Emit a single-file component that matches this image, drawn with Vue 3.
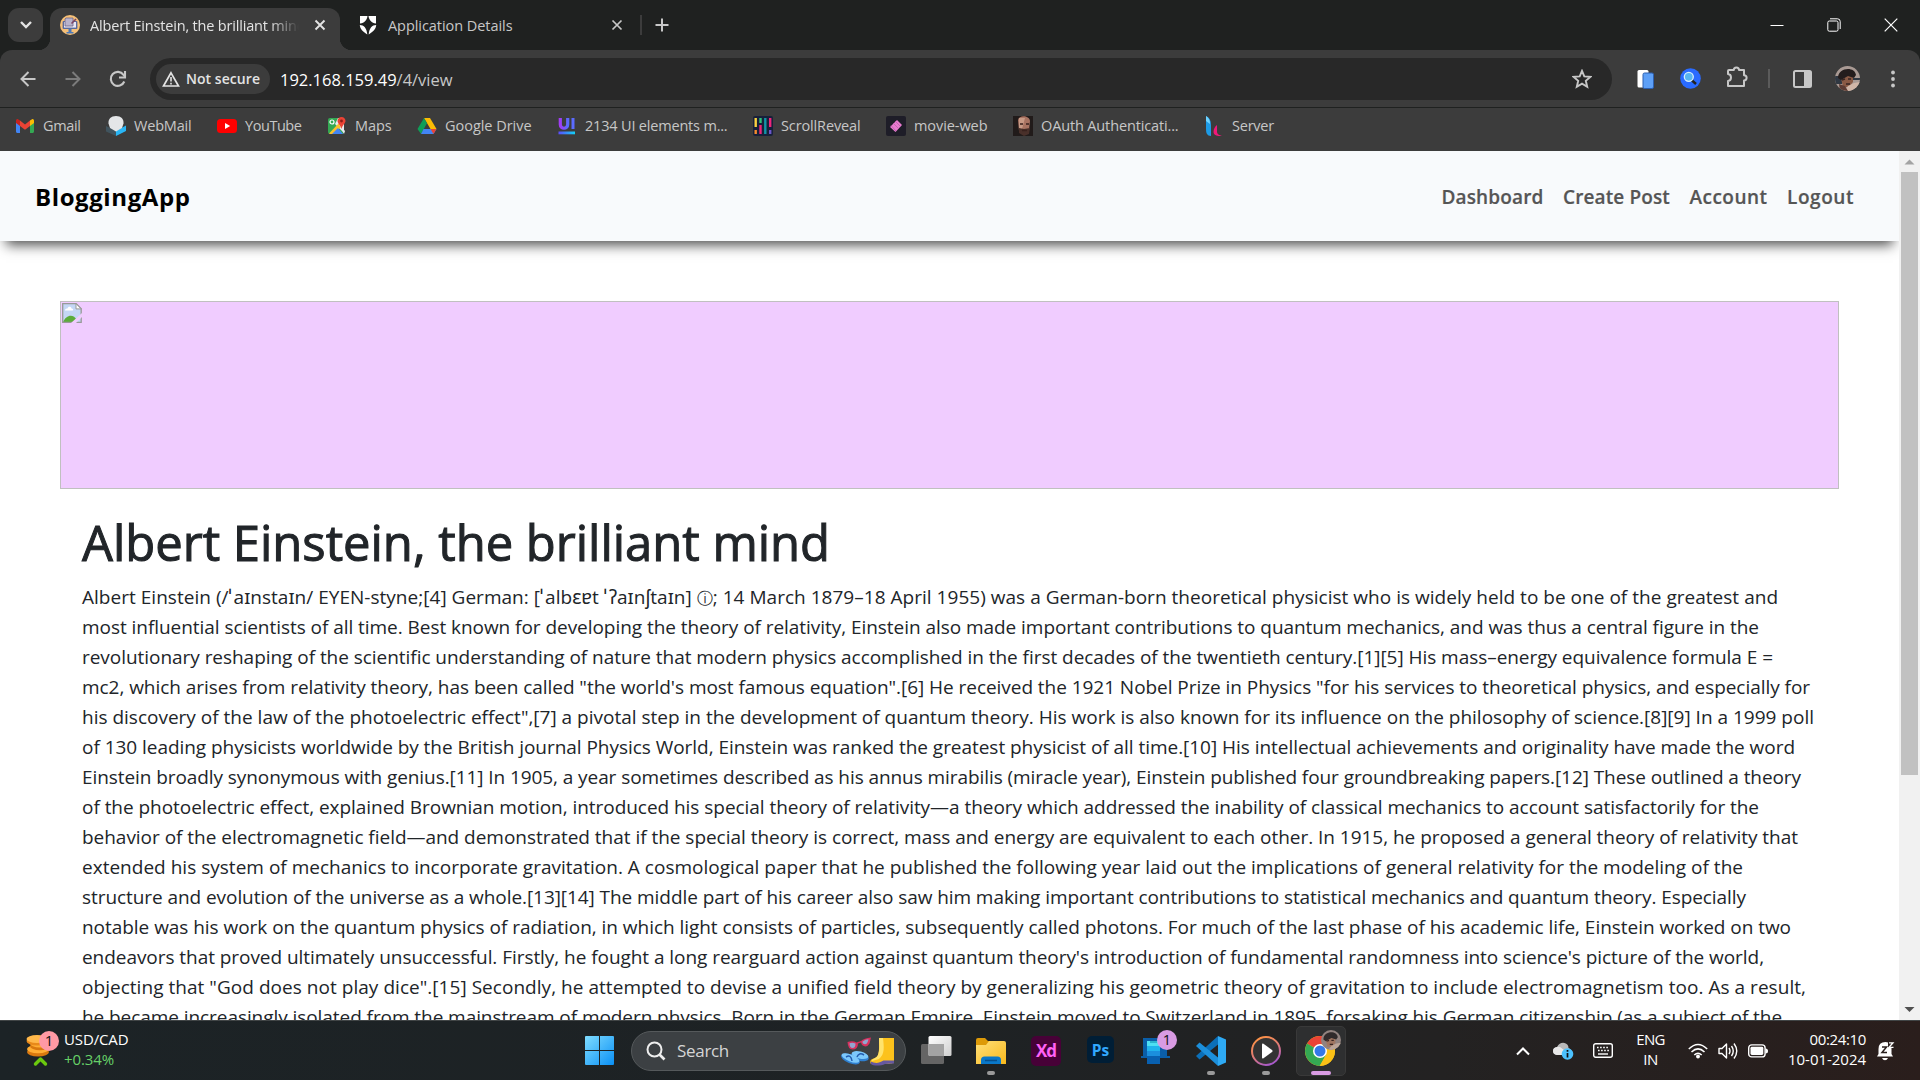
<script setup>
// Stretches a single line of text to a given width by adjusting its tracking.
const vFit = {
  mounted(el, { value }) {
    const n = el.textContent.length
    const w = el.getBoundingClientRect().width
    el.style.letterSpacing = (value - w) / n + 'px'
  },
}

const bookmarks = [
  { icon: 'gmail', text: 'Gmail', w: 37.5 },
  { icon: 'webmail', text: 'WebMail', w: 57.5 },
  { icon: 'youtube', text: 'YouTube', w: 56.5 },
  { icon: 'maps', text: 'Maps', w: 36.5 },
  { icon: 'drive', text: 'Google Drive', w: 86.5 },
  { icon: 'ui', text: '2134 UI elements m...', w: 142.5 },
  { icon: 'reveal', text: 'ScrollReveal', w: 79.5 },
  { icon: 'movie', text: 'movie-web', w: 73.5 },
  { icon: 'oauth', text: 'OAuth Authenticati...', w: 137.5 },
  { icon: 'server', text: 'Server', w: 42 },
]

const links = [
  { text: 'Dashboard', w: 102 },
  { text: 'Create Post', w: 107 },
  { text: 'Account', w: 78 },
  { text: 'Logout', w: 67 },
]

const lines = [
  ['Albert Einstein (/ˈaɪnstaɪn/ EYEN-styne;[4] German: [ˈalbɛɐt ˈʔaɪnʃtaɪn] ⓘ; 14 March 1879–18 April 1955) was a German-born theoretical physicist who is widely held to be one of the greatest and', 1696],
  ['most influential scientists of all time. Best known for developing the theory of relativity, Einstein also made important contributions to quantum mechanics, and was thus a central figure in the', 1677],
  ['revolutionary reshaping of the scientific understanding of nature that modern physics accomplished in the first decades of the twentieth century.[1][5] His mass–energy equivalence formula E =', 1691],
  ['mc2, which arises from relativity theory, has been called "the world\'s most famous equation".[6] He received the 1921 Nobel Prize in Physics "for his services to theoretical physics, and especially for', 1728],
  ['his discovery of the law of the photoelectric effect",[7] a pivotal step in the development of quantum theory. His work is also known for its influence on the philosophy of science.[8][9] In a 1999 poll', 1732],
  ['of 130 leading physicists worldwide by the British journal Physics World, Einstein was ranked the greatest physicist of all time.[10] His intellectual achievements and originality have made the word', 1713],
  ['Einstein broadly synonymous with genius.[11] In 1905, a year sometimes described as his annus mirabilis (miracle year), Einstein published four groundbreaking papers.[12] These outlined a theory', 1719],
  ['of the photoelectric effect, explained Brownian motion, introduced his special theory of relativity—a theory which addressed the inability of classical mechanics to account satisfactorily for the', 1677],
  ['behavior of the electromagnetic field—and demonstrated that if the special theory is correct, mass and energy are equivalent to each other. In 1915, he proposed a general theory of relativity that', 1716],
  ['extended his system of mechanics to incorporate gravitation. A cosmological paper that he published the following year laid out the implications of general relativity for the modeling of the', 1661],
  ['structure and evolution of the universe as a whole.[13][14] The middle part of his career also saw him making important contributions to statistical mechanics and quantum theory. Especially', 1664],
  ['notable was his work on the quantum physics of radiation, in which light consists of particles, subsequently called photons. For much of the last phase of his academic life, Einstein worked on two', 1709],
  ['endeavors that proved ultimately unsuccessful. Firstly, he fought a long rearguard action against quantum theory\'s introduction of fundamental randomness into science\'s picture of the world,', 1682],
  ['objecting that "God does not play dice".[15] Secondly, he attempted to devise a unified field theory by generalizing his geometric theory of gravitation to include electromagnetism too. As a result,', 1724],
  ['he became increasingly isolated from the mainstream of modern physics. Born in the German Empire, Einstein moved to Switzerland in 1895, forsaking his German citizenship (as a subject of the', 1700],
]

// Stress marks and the info sign need their own spacing.
const parts = (text) => text.split(/([ˈⓘ])/).filter(Boolean)
const kind = (p) => (p === 'ˈ' ? 'stress' : p === 'ⓘ' ? 'info' : '')
</script>

<template>
  <div class="screen">
    <header class="tabs">
      <div class="tab-search">
        <svg width="14" height="10" viewBox="0 0 14 10"><path d="M2 2l5 5 5-5" fill="none" stroke="#e3e3e3" stroke-width="2.4" /></svg>
      </div>
      <div class="tab active">
        <svg width="20" height="20" viewBox="0 0 20 20">
          <circle cx="10" cy="10" r="10" fill="#f6c078" />
          <rect x="2.6" y="6" width="14.8" height="8" rx="1" fill="#5a6a9c" />
          <rect x="4" y="7" width="12" height="5.6" fill="#e9e6f4" />
          <path d="M6 3h7v8H5V4z" fill="#b9b3cc" stroke="#6c6489" stroke-width=".8" />
          <path d="M16 4l-4.5 4.5" stroke="#7c4364" stroke-width="1.6" />
          <path d="M8.5 14h3v3h2v1.4h-7V17h2z" fill="#4b78b8" />
        </svg>
        <div class="tab-title fade"><span v-fit="215.5">Albert Einstein, the brilliant mind</span></div>
        <svg class="x" width="12" height="12" viewBox="0 0 12 12"><path d="M1.5 1.5l9 9M10.5 1.5l-9 9" stroke="#e3e3e3" stroke-width="1.9" /></svg>
      </div>
      <div class="tab second">
        <svg width="18" height="20" viewBox="0 0 18 20">
          <path d="M1 1h7.500C8 5 5.500 8 1 8.500zM17 1H9.500C10 5 12.500 8 17 8.500zM.8 10c4 0 7 3 7.500 9.500C4.500 17 1 14.500.8 10zM17.200 10c-4 0-7 3-7.500 9.500 3.800-2.500 7.300-5 7.500-9.500z" fill="#fff" />
        </svg>
        <div class="tab-title"><span v-fit="124.5">Application Details</span></div>
        <svg class="x" width="12" height="12" viewBox="0 0 12 12"><path d="M1.500 1.500l9 9M10.500 1.500l-9 9" stroke="#c7c7c7" stroke-width="1.700" /></svg>
      </div>
      <i class="tab-sep"></i>
      <svg class="plus" width="14" height="14" viewBox="0 0 14 14"><path d="M7 .5v13M.5 7h13" stroke="#c7c7c7" stroke-width="2" /></svg>
      <div class="win">
        <svg width="14" height="14" viewBox="0 0 14 14"><path d="M.5 7.500h13" stroke="#fff" /></svg>
        <svg width="14" height="14" viewBox="0 0 14 14" fill="none" stroke="#fff"><rect x=".8" y="3" width="10.200" height="10.200" rx="1.500" /><path d="M3 .8h7.500a2.700 2.700 0 0 1 2.700 2.700V11" /></svg>
        <svg width="14" height="14" viewBox="0 0 14 14"><path d="M.7.7l12.600 12.600M13.300.7L.7 13.300" stroke="#fff" stroke-width="1.200" /></svg>
      </div>
    </header>

    <div class="toolbar">
      <svg class="back" width="16" height="16" viewBox="0 0 16 16"><path d="M15.500 8H2M8.500 1L1.500 8l7 7" fill="none" stroke="#c7c7c7" stroke-width="2" /></svg>
      <svg class="fwd" width="16" height="16" viewBox="0 0 16 16"><path d="M.5 8H14M7.500 1l7 7-7 7" fill="none" stroke="#7b7b7b" stroke-width="2" /></svg>
      <svg class="reload" width="18" height="18" viewBox="0 0 18 18"><path d="M15.300 11.500A7 7 0 1 1 14.500 4.800L16 6.500" fill="none" stroke="#c7c7c7" stroke-width="2.100" /><path d="M16 1v6.500h-6" fill="none" stroke="#c7c7c7" stroke-width="2.100" /></svg>
      <div class="omni">
        <div class="chip">
          <svg width="18" height="16" viewBox="0 0 18 16"><path d="M9 1.800L16.500 15H1.500z" fill="none" stroke="#e3e3e3" stroke-width="1.700" /><path d="M9 6v4.500M9 11.700v1.700" stroke="#e3e3e3" stroke-width="1.600" /></svg>
          <span v-fit="74">Not secure</span>
        </div>
        <div class="url"><span v-fit="172.500">192.168.159.49<em>/4/view</em></span></div>
        <svg width="20" height="20" viewBox="0 0 20 20"><path d="M10 1.900l2.300 5.500 6 .5-4.500 3.900 1.400 5.900L10 14.600l-5.200 3.100 1.400-5.900L1.700 7.900l6-.5z" fill="none" stroke="#c7c7c7" stroke-width="1.900" /></svg>
      </div>
      <svg class="e1" width="17" height="20" viewBox="0 0 17 20"><rect x=".5" y="1" width="11" height="17.500" rx="1.500" fill="#fff" /><rect x="6" y="4" width="10.500" height="15.500" rx="1.500" fill="#5ea0f7" stroke="#2c5fb0" /></svg>
      <svg class="e2" width="21" height="21" viewBox="0 0 21 21"><circle cx="10.500" cy="10.500" r="10.300" fill="#2a6bff" /><path d="M11.500 12l4.500 4" stroke="#222" stroke-width="2.400" /><circle cx="8.800" cy="8.800" r="4.500" fill="#58b5f0" stroke="#d5eefc" stroke-width="1.300" /></svg>
      <svg class="e3" width="22" height="24" viewBox="0 0 22 24"><path d="M3 5h4.800a2.600 2.600 0 0 1 5.200 0H18v5.200a2.600 2.600 0 0 1 0 5.200V21H2v-5c4-.5 4-6.500 0-7V6q0-1 1-1z" fill="none" stroke="#c7c7c7" stroke-width="2" stroke-linejoin="round" /></svg>
      <i class="tool-sep"></i>
      <svg class="e4" width="19" height="18" viewBox="0 0 19 18"><rect x="1" y="1" width="17" height="16" rx="1.500" fill="none" stroke="#c7c7c7" stroke-width="2" /><path d="M11 1h7v16h-7z" fill="#c7c7c7" /></svg>
      <svg class="e5" width="25" height="25" viewBox="0 0 25 25">
        <defs><clipPath id="face"><circle cx="12.500" cy="12.500" r="12.500" /></clipPath></defs>
        <g clip-path="url(#face)"><path d="M0 0h25v25H0z" fill="#a99a94" /><path d="M0 10h7v8H0zM18 12h7v2h-7z" fill="#303842" /><path d="M5 8h13v8l-4 5H8z" fill="#8a5a45" /><path d="M3 12C3 1 20 0 21 9l-2 3-6-2-7 4z" fill="#241d1d" /><path d="M7 14l3-1M13 13h3M11 18h4" stroke="#392522" stroke-width="1.500" /><path d="M9 25l4-5 6-3 6-1v9z" fill="#d1b6a7" /><path d="M4 18l6 2 3 5H5z" fill="#5c3b33" /></g>
      </svg>
      <svg class="e6" width="4" height="18" viewBox="0 0 4 18" fill="#c7c7c7"><circle cx="2" cy="2.500" r="1.900" /><circle cx="2" cy="9" r="1.900" /><circle cx="2" cy="15.500" r="1.900" /></svg>
    </div>

    <div class="bookmarks">
      <div v-for="b in bookmarks" :key="b.text" class="bm">
        <svg width="20" height="20" viewBox="0 0 20 20">
          <g v-if="b.icon === 'gmail'"><path d="M1 5v10.500c0 .8.600 1.500 1.500 1.500H5V8z" fill="#4285f4" /><path d="M19 5v10.500c0 .8-.6 1.500-1.500 1.500H15V8z" fill="#34a853" /><path d="M15 4.500l2-1.200c1-.6 2 .2 2 1.500V7l-4 3z" fill="#fbbc04" /><path d="M5 4.500L3 3.300C2 2.700 1 3.500 1 4.800V7l4 3z" fill="#c5221f" /><path d="M5 4.500L10 8.400l5-3.900V10l-5 3.800L5 10z" fill="#ea4335" /></g>
          <g v-else-if="b.icon === 'webmail'"><path d="M0 10l10 5v5L0 15.500z" fill="#41545e" /><path d="M20 9.500L10 15v5l10-5z" fill="#29b6f6" /><path d="M10 0c5 0 8 3 7.500 7.500L16 12l-6 3.500L4 12 2.500 7.500C2 3 5 0 10 0z" fill="#e4e6e8" /></g>
          <g v-else-if="b.icon === 'youtube'"><rect y="3" width="20" height="14" rx="3.500" fill="#f00" /><path d="M8 7l5.200 3L8 13z" fill="#fff" /></g>
          <g v-else-if="b.icon === 'maps'"><rect x="1" y="2" width="16" height="16" rx="2" fill="#34a853" /><path d="M11 2h6v15L8 8z" fill="#e8eaed" /><path d="M2 17.500L12 7l3 3-8 8H3z" fill="#fbc02d" /><path d="M5 18l6-6 5 6z" fill="#4285f4" /><path d="M12 8l6 7-1 3z" fill="#e8eaed" /><circle cx="5" cy="6" r="2" fill="none" stroke="#fff" stroke-width="1.200" /><path d="M14.500 1c2.500 0 4 1.800 4 4s-3 4-4 8c-1-4-4-5.800-4-8s1.500-4 4-4z" fill="#ea4335" /><circle cx="14.500" cy="5" r="1.400" fill="#8c1d18" /></g>
          <g v-else-if="b.icon === 'drive'"><path d="M7 2h6l6.500 11h-6z" fill="#fbbc04" /><path d="M7 2l3 5.300L4 18l-3.500-5z" fill="#0f9d58" /><path d="M6.500 13h13L16.500 18H4z" fill="#4285f4" /><path d="M13.500 13h6l-3 5z" fill="#ea4335" /></g>
          <g v-else-if="b.icon === 'ui'"><defs><linearGradient id="uig" x2="1"><stop stop-color="#a13cf5" /><stop offset="1" stop-color="#5b6bff" /></linearGradient><linearGradient id="uib" x2="1"><stop stop-color="#5b4bff" /><stop offset="1" stop-color="#11d3f5" /></linearGradient></defs><path d="M3.300 2v6.500c0 5 7.400 5 7.400 0V2" fill="none" stroke="url(#uig)" stroke-width="3.200" /><path d="M14.500 2h3v11h-3z" fill="#5b6bff" /><path d="M1.500 15.500h16.500v2.800H1.500z" fill="url(#uib)" /></g>
          <g v-else-if="b.icon === 'reveal'"><rect width="20" height="20" rx="2" fill="#17203a" /><g stroke-width="2.400"><path d="M2.700 2v9" stroke="#fbd13f" /><path d="M2.700 14v4" stroke="#f68a2c" /><path d="M7.500 2v5" stroke="#30c27a" /><path d="M7.500 9v9" stroke="#f0247a" /><path d="M12.300 2v16" stroke="#1395a8" /><path d="M17.200 2v9" stroke="#f0247a" /><path d="M17.200 14v4" stroke="#6a55c8" /></g></g>
          <g v-else-if="b.icon === 'movie'"><rect width="20" height="20" rx="2" fill="#1e1d28" /><path d="M11 4l5 5-6.500 7L4 11z" fill="#e97bd0" /><path d="M7 7l6 6M9 5l5.500 5.500M5 9.500L10 15" stroke="#b65aa8" stroke-width=".7" /></g>
          <g v-else-if="b.icon === 'oauth'"><path d="M0 0h20v20H0z" fill="#211b1a" /><path d="M5 4c1-5 11-5 12 1l-1 9-5 5-5-4z" fill="#a87362" /><path d="M6 2h6L9 13l-3 3z" fill="#c89a86" /><path d="M6 12l5 1 6-1-1 6-5 2-5-3z" fill="#49302a" /><path d="M7 8h3M13 8h3M9 14.500h5" stroke="#38211d" stroke-width="1.400" /></g>
          <g v-else><path d="M2 0c4 2 5 5 5 10v10c-4 0-5-3-5-7z" fill="#1d9be6" /><path d="M2 0c3 2 4 4 4 8L2 5z" fill="#6fd3ff" /><path d="M13 9v7c0 2 2 3 5 4-5 .5-8.500-1-8.500-4 0-3 1.500-5.500 3.500-7z" fill="#f0187a" /></g>
        </svg>
        <span v-fit="b.w">{{ b.text }}</span>
      </div>
    </div>

    <div class="viewport">
      <main class="page">
        <nav class="nav">
          <span class="brand" v-fit="155.5">BloggingApp</span>
          <div class="links"><span v-for="l in links" :key="l.text" v-fit="l.w">{{ l.text }}</span></div>
        </nav>
        <div class="cover">
          <svg width="20" height="20" viewBox="0 0 20 20">
            <path d="M.7.7h13.500l5 5v13.600H.7z" fill="#c4d7f6" />
            <path d="M3 7.500c0-2 2-2 2.500-2 .5-2.500 4-2 4 0 2 0 2 2 1 2z" fill="#fff" />
            <path d="M1 19c3-7 10-9 14-2l-1 2.300z" fill="#5bac3b" />
            <path d="M.7.7h13.500l5 5v13.600H.7z" fill="none" stroke="#999" stroke-width="1.300" />
            <path d="M14 .7v5.200h5.200z" fill="#fff" stroke="#999" />
            <path d="M20 10v4l-6 6h-5z" fill="#f0ccff" />
          </svg>
        </div>
        <article>
          <h1><span v-fit="748">Albert Einstein, the brilliant mind</span></h1>
          <div v-for="(l, i) in lines" :key="i" class="line"><span v-fit="l[1]"><em v-for="(p, j) in parts(l[0])" :key="j" :class="kind(p)">{{ p }}</em></span></div>
        </article>
      </main>
      <aside class="scroll">
        <svg width="21" height="21" viewBox="0 0 21 21"><path d="M5.500 13.500h10L10.500 8.500z" fill="#a3a3a3" /></svg>
        <i></i>
        <svg width="21" height="21" viewBox="0 0 21 21"><path d="M5.500 8h10l-5 5z" fill="#505050" /></svg>
      </aside>
    </div>

    <footer class="taskbar">
      <svg class="coins" width="34" height="40" viewBox="0 0 34 40">
        <ellipse cx="12" cy="21" rx="11" ry="4.500" fill="#d9780f" /><ellipse cx="12" cy="18" rx="11" ry="4.300" fill="#ffad33" />
        <ellipse cx="14" cy="15" rx="10" ry="4.300" fill="#d9780f" /><ellipse cx="14" cy="12.500" rx="10" ry="4" fill="#ffad33" />
        <ellipse cx="11" cy="10" rx="10.500" ry="4.500" fill="#e8891a" /><ellipse cx="11" cy="8" rx="10.500" ry="4" fill="#ffb84a" />
        <path d="M9.500 33l5-5 5 5" fill="none" stroke="#6bc90e" stroke-width="3.400" stroke-linejoin="round" stroke-linecap="round" />
        <circle cx="23" cy="10" r="10" fill="#ff99a4" />
        <text x="23" y="15.300" text-anchor="middle" font-size="15" fill="#111">1</text>
      </svg>
      <div class="stock"><span v-fit="64.500">USD/CAD</span><br /><span class="up" v-fit="50">+0.34%</span></div>

      <svg class="start" width="29" height="29" viewBox="0 0 29 29"><defs><linearGradient id="wn" x2="1" y2="1"><stop stop-color="#7fdcff" /><stop offset="1" stop-color="#0a90f5" /></linearGradient></defs><path d="M0 1q0-1 1-1h13v14H0zM15 0h13q1 0 1 1v13H15zM0 15h14v14H1q-1 0-1-1zM15 15h14v13q0 1-1 1H15z" fill="url(#wn)" /></svg>
      <div class="search">
        <svg width="20" height="20" viewBox="0 0 20 20" fill="none" stroke="#eee" stroke-width="2"><circle cx="8.500" cy="8.500" r="7" /><path d="M13.500 13.500l5 5" stroke-width="2.600" /></svg>
        <span v-fit="52">Search</span>
        <svg class="art" width="56" height="32" viewBox="0 0 56 32">
          <path d="M7.500 7q5-1.800 9 .5l4.500-1.500q3-3 10-3.500l-1.500 6q-3 5-7.500 1.500l-1-2.500-3 1q0 6-5.500 6-4.500 0-5-7.500z" fill="#d8315f" />
          <path d="M9.500 8.300q3-1 6 .2 0 4.500-3 4.500t-3-4.700zM22.500 6.500q3-2.200 6-2.200-1 5-3.500 5t-2.500-2.800z" fill="#93a5cf" />
          <g fill="#2e7fd0"><ellipse cx="10.500" cy="24" rx="10" ry="4.300" transform="rotate(22 10.500 24)" /><ellipse cx="20" cy="21.500" rx="9" ry="4.300" transform="rotate(14 20 21.500)" /></g>
          <g fill="#7cc8fb"><ellipse cx="10.500" cy="23" rx="9.500" ry="3.500" transform="rotate(22 10.500 23)" /><ellipse cx="20" cy="20" rx="8.500" ry="3.500" transform="rotate(14 20 20)" /></g>
          <path d="M6 22q5-3 6 4M17 22q2-5 7-2" fill="none" stroke="#235cae" stroke-width="1.500" />
          <path d="M39 3h15v23c0 3-3 2-5 3H31c-2-3 0-5 4-6 5-2 4-10 4-20z" fill="#fcc21c" /><path d="M39 3h4c1 9 2 16-4 21l-7 2c-1-2 5-3 6-6 2-5 1-10 1-17z" fill="#ffe36b" /><path d="M30.500 26.500c5 2 8 2 13-1h10.500v3l-9 .5c-4 2-12 2-14 0z" fill="#6658a0" />
        </svg>
      </div>
      <svg class="tv" width="31" height="29" viewBox="0 0 31 29"><defs><linearGradient id="tvg" x2="1" y2="1"><stop stop-color="#fff" /><stop offset="1" stop-color="#cfcfcf" /></linearGradient></defs><rect y="8" width="23" height="20" rx="1.500" fill="#656565" /><rect x="7.500" width="23" height="20" rx="1.500" fill="url(#tvg)" /><path d="M7.500 8H23v12H9q-1.500 0-1.500-1.500z" fill="#a3a3a3" /></svg>

      <div class="app">
        <svg width="30" height="30" viewBox="0 0 30 30"><defs><linearGradient id="fo" x2="1" y2="1"><stop stop-color="#ffe07a" /><stop offset="1" stop-color="#f9b91c" /></linearGradient></defs><path d="M0 4q0-2 2-2h7l3 3h10v6H0z" fill="#dd9a08" /><path d="M0 9h10l3-4h15q2 0 2 2v21H0z" fill="url(#fo)" /><path d="M5 28v-4q0-3.500 3.500-3.500h13Q25 20.500 25 24v4z" fill="#0a78c9" /><path d="M9 24.500h12" stroke="#064f8c" stroke-width="1.500" /></svg><i></i>
      </div>
      <div class="app xd"><b v-fit="20">Xd</b></div>
      <div class="app ps"><b v-fit="17.500">Ps</b></div>
      <div class="app phone">
        <svg width="30" height="30" viewBox="0 0 30 30"><path d="M2 2h24v18h3v2H0v-2h2z" fill="#0a5ea8" /><path d="M6 5h13v23H6z" fill="#1b8fdd" /><path d="M6 5h13v5H6z" fill="#4de0f3" /><path d="M6 10h13v5H6z" fill="#20b4ed" /><path d="M6 20h13v8H6z" fill="#0860b0" /><path d="M9 6h7" stroke="#0b88aa" /></svg><u>1</u>
      </div>
      <div class="app">
        <svg width="30" height="30" viewBox="0 0 30 30"><path d="M0 20l3.500 3.500L22 8.500V0z" fill="#0b6fb8" /><path d="M0 10l3.500-3.500L22 21.500V30z" fill="#1c8fdb" /><path d="M22 0l8 3.500v23L22 30z" fill="#2eaaf4" /></svg><i></i>
      </div>
      <div class="app">
        <svg width="30" height="30" viewBox="0 0 30 30"><defs><linearGradient id="mp" x1=".2" x2=".7" y2="1"><stop stop-color="#ff9443" /><stop offset=".5" stop-color="#e07b73" /><stop offset="1" stop-color="#a457d0" /></linearGradient></defs><circle cx="15" cy="15" r="14" fill="#333" stroke="url(#mp)" stroke-width="2" /><path d="M11 8.500q0-1.500 1.500-.8L21 14q1.200 1 0 2l-8.500 6.300q-1.500.7-1.500-.8z" fill="#fff" /></svg><i></i>
      </div>
      <div class="app tile">
        <svg width="40" height="36" viewBox="0 0 40 36"><g transform="translate(0 6)"><circle cx="15" cy="15" r="15" fill="#fbc116" /><path d="M15 15L2 7.500a15 15 0 0 1 26 0z" fill="#ea4335" /><path d="M15 15l-13-7.500a15 15 0 0 0 12.500 22.400L21.500 18z" fill="#34a853" /><path d="M15 8h13.300A15 15 0 0 1 15 30l6.500-12z" fill="#fbc116" /><circle cx="15" cy="15" r="7" fill="#fff" /><circle cx="15" cy="15" r="5.500" fill="#3478e8" /></g>
          <g transform="translate(16 0) scale(.8)" clip-path="url(#face)"><path d="M0 0h25v25H0z" fill="#91827f" /><path d="M5 8h13v8l-4 5H8z" fill="#a07560" /><path d="M3 12C3 1 20 0 21 9l-2 3-6-2-7 4z" fill="#302a2b" /><path d="M7 14l3-1M13 13h3M11 18h4" stroke="#392522" stroke-width="1.500" /><path d="M9 25l4-5 6-3 6-1v9z" fill="#bca497" /></g></svg><i></i>
      </div>

      <svg class="chev" width="14" height="10" viewBox="0 0 14 10"><path d="M1 8.500l6-6 6 6" fill="none" stroke="#fff" stroke-width="2" /></svg>
      <svg class="cloud" width="21" height="18" viewBox="0 0 21 18"><path d="M4 13q-4-.5-4-4 0-3.500 4-4Q7 0 11.500 1q4 1 4 5 3 1 2.500 4l-3 3z" fill="#b9b9b9" /><path d="M4 13q-4-.5-4-4 0-3.500 4-4 3-1 5 1.500L15 11v2z" fill="#e7e7e7" /><circle cx="14.500" cy="12" r="5.800" fill="#4cc2ff" /><path d="M14.500 11v4.500M14.500 8v1.700" stroke="#111" stroke-width="1.700" /></svg>
      <svg class="kbd" width="20" height="15" viewBox="0 0 20 15" fill="none" stroke="#fff" stroke-width="1.400"><rect x=".7" y=".7" width="18.600" height="13.600" rx="2" /><path d="M4 4.500h12M5 7.500h11" stroke-dasharray="1.600 1.500" /><path d="M5 11h10" /></svg>
      <div class="lang"><span v-fit="28.500">ENG</span><span v-fit="14.500">IN</span></div>
      <svg class="wifi" width="20" height="16" viewBox="0 0 20 16" fill="none" stroke="#fff" stroke-width="1.500"><path d="M.8 6q9.200-9 18.400 0M3.500 9q6.500-6.300 13 0M6.300 12q3.700-3.500 7.400 0" /><circle cx="10" cy="13.500" r="1.200" fill="#fff" /></svg>
      <svg class="snd" width="20" height="18" viewBox="0 0 20 18" fill="none" stroke="#fff" stroke-width="1.400"><path d="M1 6.500h3L8.500 2v14L4 11.500H1z" stroke-linejoin="round" /><path d="M11 6q2 3 0 6M13.500 4q3.500 5 0 10M16 1.500q5.500 7.500 0 15" /></svg>
      <svg class="bat" width="20" height="14" viewBox="0 0 20 14"><rect x=".7" y=".9" width="16.400" height="12" rx="3" fill="none" stroke="#fff" stroke-width="1.400" /><rect x="2.500" y="2.800" width="12.800" height="8.200" rx="1.400" fill="#fff" /><path d="M17.500 4.500q2.500 0 2.500 2.500t-2.500 2.500z" fill="#fff" /></svg>
      <div class="clock"><span v-fit="56.500">00:24:10</span><span v-fit="78">10-01-2024</span></div>
      <svg class="bell" width="18" height="20" viewBox="0 0 18 20"><path d="M1.500 13V8q0-7 7-7 3 0 4.500 1.500l1.500 5V13l1.500 2.500H0zM5 17h6q-1 2.300-3 2.300T5 17z" fill="#fff" /><path d="M5 6h4.500L5 11.500h5" fill="none" stroke="#291f1d" stroke-width="1.500" /><path d="M11 1h6.500v6H11z" fill="#291f1d" /><path d="M12 1.800h4l-4 4.500h4.500" fill="none" stroke="#fff" stroke-width="1.300" /></svg>
    </footer>
  </div>
</template>

<style>
body {
  margin: 0;
  overflow: hidden;
}
</style>

<style scoped>
.screen {
  width: 1920px;
  height: 1080px;
  display: flex;
  flex-direction: column;
  overflow: hidden;
  background: #1f2120;
  font-family: 'Open Sans', 'Noto Sans', 'DejaVu Sans', sans-serif;
  font-size: 14.5px;
}
svg {
  display: block;
  flex: none;
}
span {
  display: inline-block;
  white-space: nowrap;
}
em {
  font-style: normal;
}
.tabs {
  height: 50px;
  display: flex;
  align-items: center;
}
.tab-search {
  width: 35px;
  height: 34px;
  margin-left: 8px;
  border-radius: 11px;
  background: #3c3c3c;
  display: flex;
  align-items: center;
  justify-content: center;
}
.tab {
  display: flex;
  align-items: center;
  color: #c7c7c7;
  font-size: 14.5px;
  line-height: 20px;
}
.tab.active {
  position: relative;
  align-self: flex-end;
  box-sizing: border-box;
  width: 290px;
  height: 42px;
  margin-left: 7px;
  padding: 0 14px 8px 10px;
  border-radius: 12px 12px 0 0;
  background: #3c3c3c;
  color: #e3e3e3;
}
.tab.active::before,
.tab.active::after {
  content: '';
  position: absolute;
  bottom: 0;
  width: 12px;
  height: 12px;
}
.tab.active::before {
  left: -12px;
  background: radial-gradient(circle at 0 0, transparent 12px, #3c3c3c 12.5px);
}
.tab.active::after {
  right: -12px;
  background: radial-gradient(circle at 100% 0, transparent 12px, #3c3c3c 12.5px);
}
.tab-title {
  margin-left: 10px;
  padding-top: 2px;
}
.second .tab-title {
  margin-left: 11px;
}
.fade {
  width: 209px;
  overflow: hidden;
  mask-image: linear-gradient(90deg, #000 86%, transparent);
}
.x {
  margin-left: auto;
}
.tab.second {
  width: 264px;
  margin-left: 19px;
}
.tab-sep {
  width: 2px;
  height: 20px;
  margin-left: 17px;
  background: #3c3c3c;
}
.plus {
  margin-left: 13px;
}
.win {
  margin-left: auto;
  margin-right: 22px;
  display: flex;
  gap: 43px;
}
.toolbar {
  height: 57px;
  display: flex;
  align-items: center;
  background: #3c3c3c;
  border-radius: 12px 12px 0 0;
}
.back {
  margin-left: 20px;
}
.fwd {
  margin-left: 29px;
}
.reload {
  margin-left: 28px;
}
.omni {
  width: 1462px;
  height: 42px;
  margin-left: 23px;
  box-sizing: border-box;
  padding: 0 20px 0 6px;
  border-radius: 21px;
  background: #282828;
  display: flex;
  align-items: center;
}
.chip {
  width: 114px;
  height: 30px;
  box-sizing: border-box;
  padding-left: 6px;
  border-radius: 15px;
  background: #3c3c3c;
  color: #e3e3e3;
  font-size: 14px;
  font-weight: 600;
  display: flex;
  align-items: center;
  gap: 6px;
}
.url {
  flex: 1;
  margin-left: 10px;
  padding-top: 1px;
  color: #fff;
  font-size: 16.5px;
}
.url em {
  color: #c7c7c7;
}
.e1 {
  margin-left: 25px;
}
.e2 {
  margin-left: 26px;
}
.e3 {
  margin: 0 0 3px 25px;
}
.tool-sep {
  width: 2px;
  height: 19px;
  margin-left: 20px;
  background: #5b5b5b;
}
.e4 {
  margin-left: 23px;
}
.e5 {
  margin-left: 23px;
}
.e6 {
  margin-left: 31px;
}
.bookmarks {
  height: 44px;
  box-sizing: border-box;
  border-top: 1px solid #1f2120;
  padding: 0 0 7px 15px;
  display: flex;
  align-items: center;
  gap: 25.5px;
  background: #3c3c3c;
  color: #c7c7c7;
  font-size: 14.5px;
}
.bm {
  display: flex;
  align-items: center;
  gap: 8px;
}
.bm span {
  padding-bottom: 2px;
}
.viewport {
  height: 869px;
  display: flex;
  background: #fff;
}
.page {
  flex: 1;
  overflow: hidden;
}
.nav {
  height: 90px;
  box-sizing: border-box;
  padding: 0 45px 0 35px;
  display: flex;
  align-items: center;
  justify-content: space-between;
  background: #f8fafc;
  box-shadow: 0 10px 12px -6px rgba(0, 0, 0, 0.7);
}
.brand {
  font-size: 24px;
  font-weight: 700;
  color: #000;
}
.links {
  display: flex;
  gap: 19.5px;
  padding-top: 2px;
  font-size: 19px;
  font-weight: 600;
  color: #555;
  -webkit-text-stroke: 0.2px #555;
}
.cover {
  height: 188px;
  box-sizing: border-box;
  margin: 60px 60px 0;
  padding: 1px;
  border: 1px solid #c0c0c0;
  background: #f0ccff;
}
article {
  padding: 24px 0 0 82px;
  color: #212529;
}
h1 {
  height: 60px;
  margin: 0 0 9px;
  font-size: 49px;
  line-height: 58px;
  font-weight: 400;
  -webkit-text-stroke: 1px #212529;
}
.line {
  height: 30px;
  line-height: 30px;
  font-size: 19px;
}
.stress {
  padding-right: 2px;
}
.info {
  font-size: 16px;
  line-height: 1;
}
.scroll {
  width: 21px;
  display: flex;
  flex-direction: column;
  background: #f1f1f1;
}
.scroll i {
  width: 17px;
  height: 603px;
  margin: 0 2px auto;
  background: #c1c1c1;
}
.taskbar {
  height: 60px;
  box-sizing: border-box;
  border-top: 1px solid #414546;
  display: flex;
  align-items: center;
  background: linear-gradient(90deg, #1c2326 0%, #1e2224 50%, #232222 75%, #2a1e1c 100%);
  color: #fff;
}
.coins {
  margin-left: 26px;
}
.stock {
  width: 517px;
  margin-left: 4px;
  padding-bottom: 4px;
  font-size: 15px;
  line-height: 20px;
}
.up {
  color: #67d168;
}
.start {
  margin-left: 4px;
}
.search {
  width: 275px;
  height: 40px;
  box-sizing: border-box;
  margin-left: 17px;
  padding: 0 9px 0 14px;
  border: 1px solid #55595b;
  border-radius: 20px;
  background: #3c4043;
  display: flex;
  align-items: center;
  font-size: 17px;
  color: #d5d5d5;
}
.search span {
  margin-left: 11px;
}
.art {
  margin-left: auto;
}
.tv {
  margin-left: 15px;
}
.app {
  position: relative;
  width: 50px;
  height: 50px;
  margin-left: 5px;
  display: flex;
  align-items: center;
  justify-content: center;
}
.tv + .app {
  margin-left: 14px;
}
.app i {
  position: absolute;
  bottom: 1px;
  left: 21px;
  width: 8px;
  height: 4px;
  border-radius: 2px;
  background: #9a9a9a;
}
.app b {
  display: block;
  white-space: nowrap;
  font-weight: 700;
  font-size: 17px;
  line-height: 28px;
}
.xd {
  width: 30px;
  height: 30px;
  margin: 0 0 0 15px;
  border-radius: 5px;
  background: #470137;
  color: #ff61f6;
}
.ps {
  width: 27px;
  height: 27px;
  margin: 0 1px 2px 26px;
  border-radius: 5px;
  background: #001e36;
  color: #31a8ff;
}
.ps b {
  font-size: 15.5px;
}
.phone {
  margin-left: 16px;
}
.phone u {
  position: absolute;
  left: 26px;
  top: 4px;
  width: 20px;
  height: 20px;
  border-radius: 50%;
  background: #d99be3;
  color: #111;
  font-size: 14.5px;
  line-height: 20px;
  text-align: center;
  text-decoration: none;
}
.tile {
  box-sizing: border-box;
  border: 1px solid #393939;
  border-radius: 5px;
  background: #2e2f30;
}
.tile svg {
  margin: -6px 0 0 8px;
}
.tile i {
  left: 14px;
  bottom: 0;
  width: 20px;
  background: #d99be3;
}
.chev {
  margin-left: 170px;
}
.cloud {
  margin-left: 23px;
}
.kbd {
  margin-left: 19px;
}
.lang,
.clock {
  display: flex;
  flex-direction: column;
  padding-bottom: 3px;
  font-size: 15px;
  line-height: 20px;
}
.lang {
  width: 29px;
  margin-left: 23px;
  align-items: center;
}
.wifi {
  margin-left: 23px;
}
.snd {
  margin-left: 10px;
}
.bat {
  margin-left: 10px;
}
.clock {
  width: 78px;
  margin-left: 20px;
  align-items: flex-end;
}
.bell {
  margin-left: 11px;
}
</style>
